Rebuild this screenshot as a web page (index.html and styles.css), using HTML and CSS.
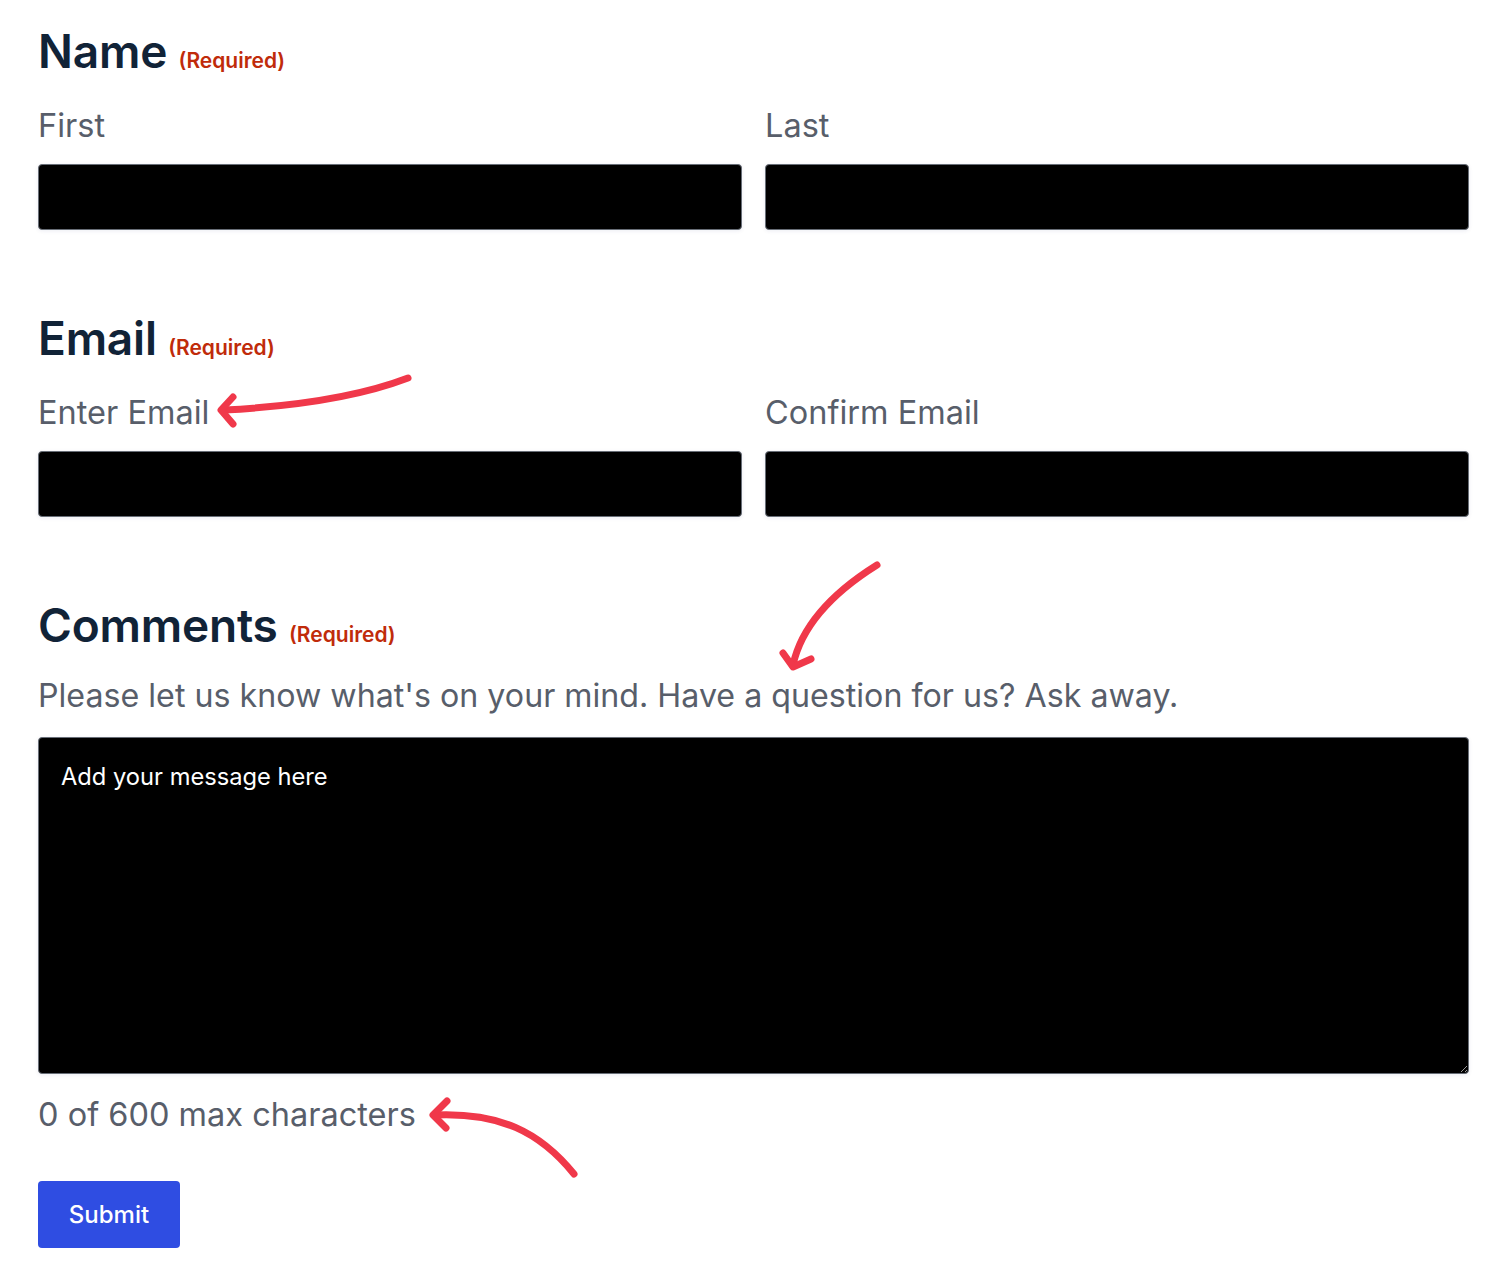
FILE: index.html
```html
<!DOCTYPE html>
<html lang="en">
<head>
<meta charset="utf-8">
<title>Contact form</title>
<link rel="stylesheet" href="styles.css">
</head>
<body>
<form class="form">
  <div class="field" role="group" aria-labelledby="lg-name">
    <div class="legend" id="lg-name">Name <span class="req">(Required)</span></div>
    <div class="cols">
      <div class="col">
        <label class="sublabel" for="first">First</label>
        <input class="input" id="first" type="text">
      </div>
      <div class="col">
        <label class="sublabel" for="last">Last</label>
        <input class="input" id="last" type="text">
      </div>
    </div>
  </div>

  <div class="field" role="group" aria-labelledby="lg-email">
    <div class="legend" id="lg-email">Email <span class="req">(Required)</span></div>
    <div class="cols">
      <div class="col">
        <label class="sublabel" for="email">Enter Email</label>
        <input class="input" id="email" type="email">
      </div>
      <div class="col">
        <label class="sublabel" for="email2">Confirm Email</label>
        <input class="input" id="email2" type="email">
      </div>
    </div>
  </div>

  <div class="field field-last" role="group" aria-labelledby="lg-comments">
    <div class="legend legend-tight" id="lg-comments">Comments <span class="req">(Required)</span></div>
    <p class="sublabel desc">Please let us know what's on your mind. Have a question for us? Ask away.</p>
    <textarea class="textarea" placeholder="Add your message here"></textarea>
    <p class="counter">0 of 600 max characters</p>
  </div>

  <button class="submit" type="button">Submit</button>

  <svg class="notes" width="1500" height="1274" viewBox="0 0 1500 1274" aria-hidden="true">
    <g fill="none" stroke="#f0384a" stroke-width="7" stroke-linecap="round" stroke-linejoin="round">
      <path d="M408,378 Q340,404 224,410"/>
      <path d="M233,397 L221,410 L233,424"/>
      <path d="M877,565 Q805,610 793,665"/>
      <path d="M783,653 L793,667 L811,659"/>
      <path d="M574,1174 C540,1132 500,1112 434,1115"/>
      <path d="M447,1101 L433,1115 L446,1128"/>
    </g>
  </svg>
</form>
</body>
</html>
```

FILE: styles.css
```css
html, body {
  margin: 0;
  padding: 0;
  background: #ffffff;
}

body {
  font-family: Inter, "Noto Sans", "Liberation Sans", sans-serif;
  color: #585e6a;
}

.form {
  position: relative;
  width: 1431px;
  padding: 22px 31px 0 38px;
}

.field {
  margin: 0 0 79px 0;
}

.field-last {
  margin-bottom: 46px;
}

.legend {
  font-size: 46px;
  line-height: 58px;
  height: 58px;
  font-weight: 600;
  color: #112337;
  letter-spacing: -0.2px;
  margin-bottom: 26px;
  white-space: nowrap;
}

.legend-tight {
  margin-bottom: 22px;
}

.req {
  font-size: 21px;
  font-weight: 600;
  color: #c02b0a;
  letter-spacing: 0;
  margin-left: 0;
}

.cols {
  display: grid;
  grid-template-columns: 1fr 1fr;
  column-gap: 23px;
}

.col {
  display: flex;
  flex-direction: column;
}

.sublabel {
  display: block;
  font-size: 32.5px;
  line-height: 40px;
  height: 40px;
  font-weight: 400;
  color: #585e6a;
  margin: 0 0 18px 0;
}

.desc {
  font-size: 32.2px;
  margin-bottom: 21px;
}

.input {
  display: block;
  box-sizing: border-box;
  width: 100%;
  height: 66px;
  margin: 0;
  background: #000000;
  border: 1px solid #686e77;
  border-radius: 4px;
  box-shadow: 0 1px 4px rgba(18, 25, 97, 0.08);
  color: #ffffff;
}

.textarea {
  display: block;
  box-sizing: border-box;
  width: 100%;
  height: 337px;
  margin: 0;
  padding: 21px 22px;
  background: #000000;
  border: 1px solid #686e77;
  border-radius: 4px;
  box-shadow: 0 1px 4px rgba(18, 25, 97, 0.08);
  color: #ffffff;
  font-family: Inter, "Noto Sans", "Liberation Sans", sans-serif;
  font-size: 23.7px;
  line-height: 36px;
  resize: vertical;
}

.textarea::placeholder {
  color: #ffffff;
  opacity: 1;
}

.counter {
  margin: 21px 0 0 0;
  font-size: 32.5px;
  line-height: 40px;
  height: 40px;
  color: #585e6a;
}

.submit {
  display: block;
  width: 142px;
  height: 67px;
  padding: 0;
  border: 0;
  border-radius: 4px;
  background: #2f4de2;
  color: #ffffff;
  font-family: Inter, "Noto Sans", "Liberation Sans", sans-serif;
  font-size: 24px;
  font-weight: 500;
}

.notes {
  position: absolute;
  left: 0;
  top: 0;
  pointer-events: none;
}
```
